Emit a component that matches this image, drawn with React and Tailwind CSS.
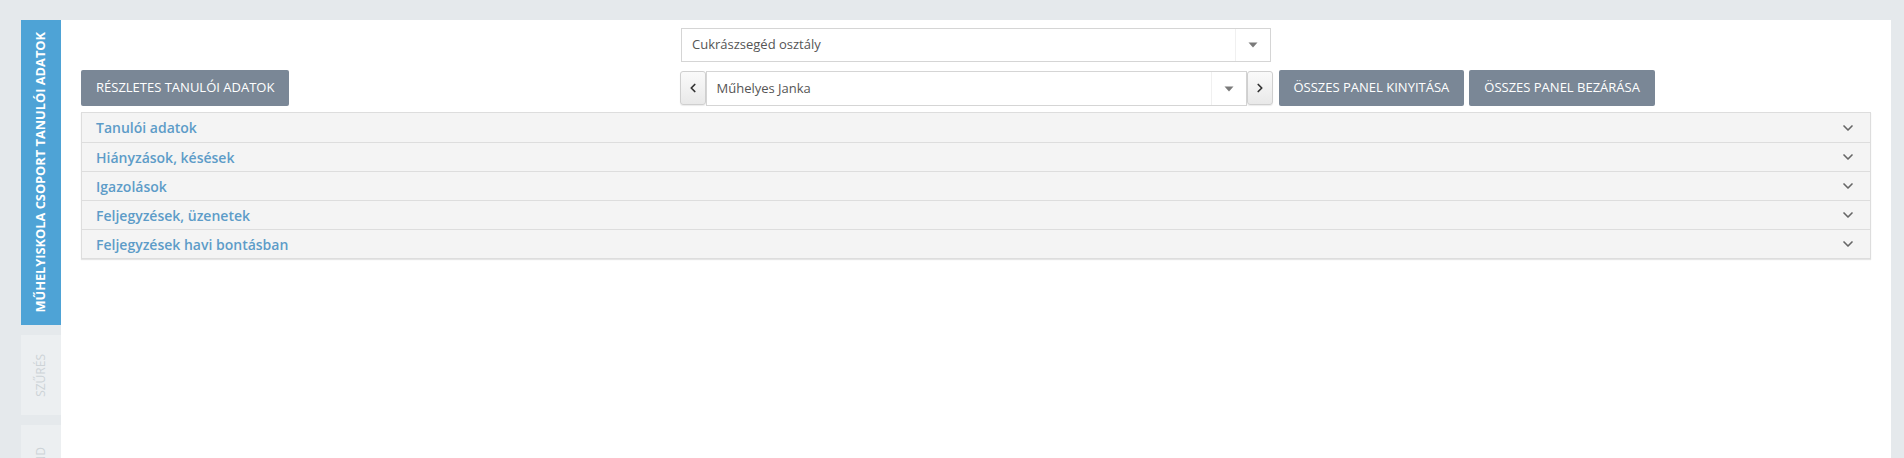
import React from "react";
import { ChevronDown, ChevronLeft, ChevronRight } from "lucide-react";

const font = { fontFamily: '"Open Sans", "Liberation Sans", sans-serif' };

function Caret() {
  return (
    <svg width="10" height="6" viewBox="0 0 10 6" className="block">
      <path d="M0.5 0.5 L9.5 0.5 L5 5.5 Z" fill="#7a7a7a" />
    </svg>
  );
}

function Select({ value, className }) {
  return (
    <div className={`flex items-stretch bg-white border border-[#d5d5d5] ${className}`}>
      <div className="flex-1 flex items-center pl-[10px] text-[13px] text-[#555]">{value}</div>
      <div className="w-[35px] border-l border-[#f0f0f0] flex items-center justify-center">
        <Caret />
      </div>
    </div>
  );
}

function ArrowBtn({ children }) {
  return (
    <div className="w-[26px] h-[34px] flex items-center justify-center rounded-[3px] border border-[#cfcfcf] bg-gradient-to-b from-[#fafafa] to-[#e9e9e9] text-[#333] shadow-[0_1px_1px_rgba(0,0,0,0.08)]">
      {children}
    </div>
  );
}

function GrayBtn({ children }) {
  return (
    <div className="h-[36px] px-[15px] flex items-center rounded-[2px] bg-[#7a8796] text-white text-[13px] uppercase whitespace-nowrap">
      {children}
    </div>
  );
}

const rows = [
  "Tanulói adatok",
  "Hiányzások, késések",
  "Igazolások",
  "Feljegyzések, üzenetek",
  "Feljegyzések havi bontásban",
];

export default function App() {
  return (
    <div style={font} className="h-screen overflow-hidden bg-[#e5e9ec] pt-5 pl-[21px] pr-[13px] flex">
      <div className="w-10 shrink-0 flex flex-col gap-[10px]">
        <div className="h-[305px] shrink-0 bg-[#4ea3d6] flex items-center justify-center">
          <span className="[writing-mode:vertical-rl] rotate-180 text-white text-[12.8px] font-bold whitespace-nowrap">
            MŰHELYISKOLA CSOPORT TANULÓI ADATOK
          </span>
        </div>
        <div className="h-[80px] shrink-0 bg-[#eceff1] flex items-center justify-center">
          <span className="[writing-mode:vertical-rl] rotate-180 text-[#cdd3d7] text-[12px] whitespace-nowrap">
            SZŰRÉS
          </span>
        </div>
        <div className="h-[100px] shrink-0 bg-[#eceff1] flex items-start justify-center pt-[22px]">
          <span className="[writing-mode:vertical-rl] rotate-180 text-[#cdd3d7] text-[12px] whitespace-nowrap">
            ÓRAREND
          </span>
        </div>
      </div>

      <div className="flex-1 bg-white px-5 pt-2">
        <div className="flex justify-center">
          <Select value="Cukrászsegéd osztály" className="w-[590px] h-[34px]" />
        </div>

        <div className="mt-[7px] grid grid-cols-[1fr_auto_1fr] items-center">
          <div className="flex">
            <GrayBtn>Részletes tanulói adatok</GrayBtn>
          </div>
          <div className="flex items-center">
            <ArrowBtn>
              <ChevronLeft size={14} strokeWidth={3} />
            </ArrowBtn>
            <Select value="Műhelyes Janka" className="w-[541px] h-[35px] mt-[2px]" />
            <ArrowBtn>
              <ChevronRight size={14} strokeWidth={3} />
            </ArrowBtn>
          </div>
          <div className="flex gap-[5px] pl-[6px]">
            <GrayBtn>Összes panel kinyitása</GrayBtn>
            <GrayBtn>Összes panel bezárása</GrayBtn>
          </div>
        </div>

        <div className="mt-[6px] border border-[#dddddd] shadow-[0_1px_1px_rgba(0,0,0,0.1)]">
          {rows.map((r, i) => (
            <div
              key={r}
              className={`h-[29px] bg-[#f4f4f4] flex items-center justify-between pl-[14px] pr-[14px] ${
                i > 0 ? "border-t border-[#dddddd]" : ""
              }`}
            >
              <span className="text-[14px] font-semibold text-[#5d9cc8]">{r}</span>
              <ChevronDown size={16} strokeWidth={2.5} className="text-[#666]" />
            </div>
          ))}
        </div>
      </div>
    </div>
  );
}
